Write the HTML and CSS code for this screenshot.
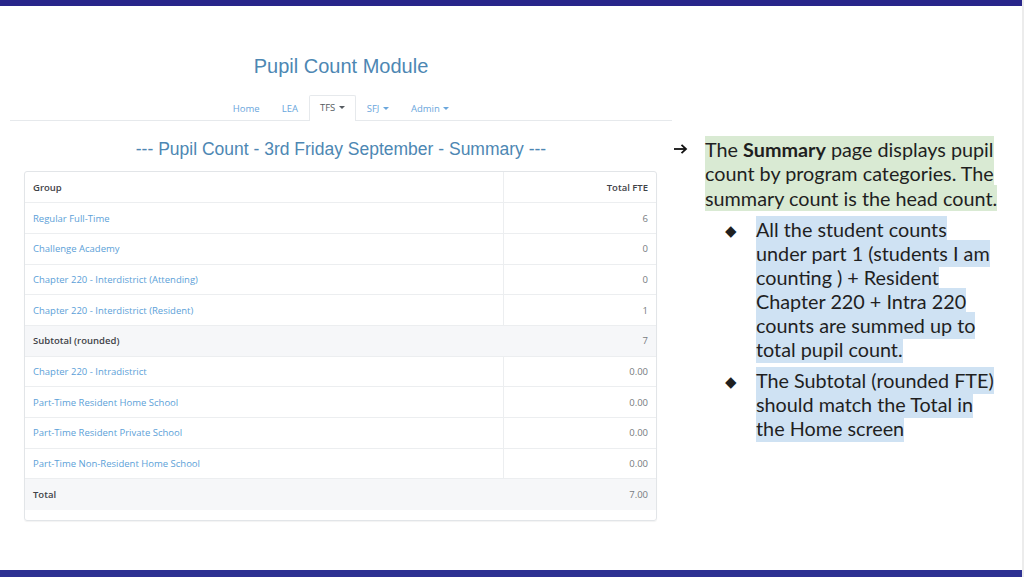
FILE: index.html
```html
<!DOCTYPE html>
<html lang="en">
<head>
<meta charset="utf-8">
<title>Pupil Count Module - Summary</title>
<link rel="stylesheet" href="styles.css">
</head>
<body>
<div class="page">
  <div class="topbar"></div>
  <div class="main">
    <div class="left">
      <h1 class="title">Pupil Count Module</h1>
      <nav class="tabs">
        <a class="tab">Home</a>
        <a class="tab">LEA</a>
        <a class="tab active">TFS <span class="caret"></span></a>
        <a class="tab">SFJ <span class="caret"></span></a>
        <a class="tab">Admin <span class="caret"></span></a>
      </nav>
      <h2 class="heading">--- Pupil Count - 3rd Friday September - Summary ---</h2>
      <div class="card">
        <table class="grid">
          <thead>
            <tr><th class="c1">Group</th><th class="c2">Total FTE</th></tr>
          </thead>
          <tbody>
            <tr><td class="c1"><a>Regular Full-Time</a></td><td class="c2">6</td></tr>
            <tr><td class="c1"><a>Challenge Academy</a></td><td class="c2">0</td></tr>
            <tr><td class="c1"><a>Chapter 220 - Interdistrict (Attending)</a></td><td class="c2">0</td></tr>
            <tr><td class="c1"><a>Chapter 220 - Interdistrict (Resident)</a></td><td class="c2">1</td></tr>
            <tr class="sum"><td class="c1">Subtotal (rounded)</td><td class="c2">7</td></tr>
            <tr><td class="c1"><a>Chapter 220 - Intradistrict</a></td><td class="c2">0.00</td></tr>
            <tr><td class="c1"><a>Part-Time Resident Home School</a></td><td class="c2">0.00</td></tr>
            <tr><td class="c1"><a>Part-Time Resident Private School</a></td><td class="c2">0.00</td></tr>
            <tr><td class="c1"><a>Part-Time Non-Resident Home School</a></td><td class="c2">0.00</td></tr>
            <tr class="sum"><td class="c1">Total</td><td class="c2">7.00</td></tr>
          </tbody>
        </table>
      </div>
    </div>
    <div class="right">
      <div class="point">
        <span class="mark arrow"><svg width="15" height="12" viewBox="0 0 15 12" aria-hidden="true"><path d="M1 6H12.5" stroke="#111" stroke-width="1.8" fill="none"/><path d="M8.5 1.8L13 6L8.5 10.2" stroke="#111" stroke-width="1.8" fill="none" stroke-linejoin="miter"/></svg></span>
        <p class="text"><span class="hl green">The <b>Summary</b> page displays pupil count by program categories. The summary count is the head count.</span></p>
      </div>
      <div class="bullet">
        <span class="mark diamond">&#9670;</span>
        <p class="text"><span class="hl blue">All the student counts under part 1 (students I am counting ) + Resident Chapter 220 + Intra 220 counts are summed up to total pupil count.</span></p>
      </div>
      <div class="bullet">
        <span class="mark diamond">&#9670;</span>
        <p class="text"><span class="hl blue">The Subtotal (rounded FTE) should match the Total in the Home screen</span></p>
      </div>
    </div>
  </div>
  <div class="bottombar"></div>
</div>
</body>
</html>
```

FILE: styles.css
```css
* { box-sizing: border-box; }
html, body { margin: 0; padding: 0; background: #ffffff; }
body { font-family: "Liberation Sans", Arial, sans-serif; }

.page {
  width: 1024px;
  height: 577px;
  display: flex;
  flex-direction: column;
  overflow: hidden;
  border-right: 2px solid #ececec;
}
.topbar { height: 6px; background: #28268a; flex: none; }
.bottombar { height: 7px; background: #2e3192; flex: none; }

.main { flex: 1; display: flex; }

/* ---------- left: app screenshot ---------- */
.left {
  width: 662px;
  margin-left: 10px;
  padding-top: 48px;
  display: flex;
  flex-direction: column;
  flex: none;
}
.title {
  margin: 0;
  text-align: center;
  font-weight: normal;
  font-size: 20px;
  line-height: 24px;
  color: #4d87b3;
}
.tabs {
  margin-top: 17px;
  height: 26px;
  display: flex;
  justify-content: center;
  align-items: flex-end;
  border-bottom: 1px solid #e6e9ec;
  font-family: "Open Sans", sans-serif;
  font-size: 9.5px;
}
.tab {
  height: 25px;
  line-height: 24px;
  padding: 0 10px;
  color: #6aa6dc;
  border: 1px solid transparent;
  border-bottom: none;
  margin-bottom: -1px;
}
.tab.active {
  color: #555a60;
  background: #fff;
  border-color: #e6e9ec;
  border-radius: 2px 2px 0 0;
  height: 26px;
}
.caret {
  display: inline-block;
  width: 0;
  height: 0;
  border-left: 3px solid transparent;
  border-right: 3px solid transparent;
  border-top: 3px solid currentColor;
  vertical-align: 2px;
  margin-left: 1px;
}
.heading {
  margin: 18px 0 0;
  text-align: center;
  font-weight: normal;
  font-size: 17.5px;
  line-height: 20px;
  color: #4d87b3;
}
.card {
  margin: 12px 15px 0 14px;
  border: 1px solid #e2e5e8;
  border-radius: 3px;
  padding-bottom: 10px;
  box-shadow: 0 1px 1px rgba(0,0,0,0.05);
}
.grid {
  width: 100%;
  border-collapse: collapse;
  font-family: "Open Sans", sans-serif;
  font-size: 9.5px;
}
.grid th, .grid td {
  height: 30.7px;
  padding: 0 8px;
  border-top: 1px solid #eceef0;
  vertical-align: middle;
}
.grid thead th { border-top: none; color: #3f4348; font-weight: 600; }
.grid .c1 { text-align: left; }
.grid .c2 { text-align: right; width: 153px; border-left: 1px solid #eceef0; color: #777b80; }
.grid thead .c2 { color: #3f4348; }
.grid td a { color: #5c9fd8; }
.grid tr.sum td { background: #f6f7f9; color: #3f4348; font-weight: 600; }
.grid tr.sum .c2 { border-left: none; color: #777b80; font-weight: normal; }

/* ---------- right: notes ---------- */
.right {
  flex: 1;
  padding-top: 131px;
  padding-left: 1px;
  padding-right: 21px;
  font-family: Lato, "Liberation Sans", sans-serif;
  font-size: 19.8px;
  color: #1f1f1f;
}
.point, .bullet { display: flex; }
.bullet { padding-left: 52px; margin-top: 7px; }
.mark { flex: none; line-height: 24px; }
.arrow { width: 32px; display: flex; align-items: center; height: 24.5px; }
.arrow svg { display: block; }
.diamond { width: 31px; font-size: 15px; }
.text { margin: 0; line-height: 24px; }
.point .text { line-height: 24.5px; }
.hl {
  padding: 1.4px 0;
  -webkit-box-decoration-break: clone;
  box-decoration-break: clone;
}
.green { background: #d9ead3; }
.blue { background: #cfe2f3; }
.text b { font-weight: bold; }
```
